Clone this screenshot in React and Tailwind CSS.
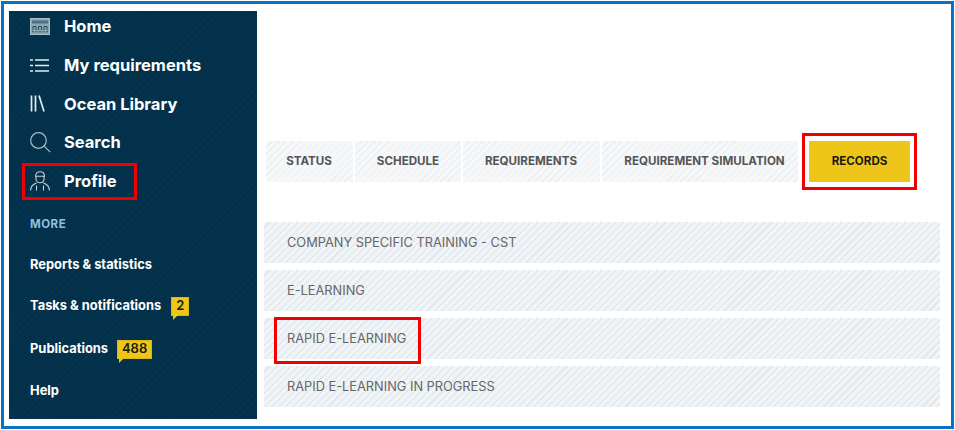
const tabStripes = 'bg-[repeating-linear-gradient(135deg,#f6f7f9_0,#f6f7f9_4px,#eceff2_4px,#eceff2_5px)]'
const rowStripes = 'bg-[repeating-linear-gradient(135deg,#f1f4f6_0,#f1f4f6_3.5px,#e3e8ed_3.5px,#e3e8ed_5px)]'

function HomeIcon() {
  return (
    <svg width="20" height="17" viewBox="0 0 20 17">
      <rect x="0.5" y="0.5" width="19" height="16" fill="#8ea5b2" stroke="#a9bcc7" />
      <rect x="2" y="2.5" width="16" height="3" fill="#4f7184" />
      <path d="M3 12V8.5h3V12M8.5 12V8.5h3V12M14 12V8.5h3V12" fill="none" stroke="#1d4a62" />
      <path d="M2 13.8h16" stroke="#1d4a62" strokeDasharray="2 1.5" />
    </svg>
  )
}

function ListIcon() {
  return (
    <svg width="19" height="15" viewBox="0 0 19 15" stroke="#e4ebef" strokeWidth="1.7">
      <path d="M0 2h3M5 2h14M0 7.5h3M5 7.5h14M0 13h3M5 13h14" />
    </svg>
  )
}

function LibraryIcon() {
  return (
    <svg width="15" height="17" viewBox="0 0 15 17" stroke="#e4ebef" strokeWidth="1.7" fill="none">
      <path d="M1.5 0.5v16M5.5 0.5v16M9 0.5l5 16" />
    </svg>
  )
}

function SearchIcon() {
  return (
    <svg width="21" height="21" viewBox="0 0 21 21" stroke="#a9bcc7" strokeWidth="1.2" fill="none">
      <circle cx="8.5" cy="8.5" r="7.8" />
      <path d="M14.2 14.2l6 6" />
    </svg>
  )
}

function ProfileIcon() {
  return (
    <svg width="20" height="20" viewBox="0 0 20 20" stroke="#c3d0d8" strokeWidth="1.1" fill="none">
      <path d="M5.5 5.2c0-6 9-6 9 0M5 5.2h10M6 5.5v2.5c0 5 8 5 8 0v-2.5" />
      <path d="M0.6 19.5c0-5 3-6.5 6-7.5M19.4 19.5c0-5-3-6.5-6-7.5M6.5 19.5v-5M13.5 19.5v-5" />
    </svg>
  )
}

function Badge({ children, className }) {
  return (
    <span className={`relative flex h-[19px] items-center justify-center border border-[#d8b61a] bg-[#eec61a] text-[13px] font-semibold text-[#1b1b10] ${className}`}>
      {children}
      <span className="absolute top-full left-[1px] size-0 border-t-[5px] border-r-[5px] border-t-[#eec61a] border-r-transparent" />
    </span>
  )
}

const mainNav = [
  { label: 'Home', icon: <HomeIcon /> },
  { label: 'My requirements', icon: <ListIcon /> },
  { label: 'Ocean Library', icon: <LibraryIcon /> },
  { label: 'Search', icon: <SearchIcon /> },
  { label: 'Profile', icon: <ProfileIcon /> },
]

const tabs = [
  { label: 'STATUS', w: 'w-[89px]' },
  { label: 'SCHEDULE', w: 'w-[108px] pl-px' },
  { label: 'REQUIREMENTS', w: 'w-[139px]' },
  { label: 'REQUIREMENT SIMULATION', w: 'w-[198px] pl-[10px]' },
]

const rows = ['COMPANY SPECIFIC TRAINING - CST', 'E-LEARNING', 'RAPID E-LEARNING', 'RAPID E-LEARNING IN PROGRESS']

export default function App() {
  return (
    <div className="h-[430px] w-[955px] overflow-hidden bg-white pt-[1px] pl-[1px] font-['Inter',sans-serif]">
      <div className="flex h-[428px] w-[953px] border-[3px] border-[#0a72c4] pt-[7px] pl-[5px]">
        {/* Sidebar */}
        <aside className="relative h-[408px] w-[248px] shrink-0 bg-[#03304a] bg-[repeating-linear-gradient(135deg,#03304a_0,#03304a_4px,#06354e_4px,#06354e_5px)] pl-[21px] text-white">
          <nav className="-mt-[4px] flex flex-col">
            {mainNav.map((item) => (
              <a key={item.label} className="flex h-[38.75px] items-center text-[16.5px] leading-none font-bold">
                <span className="flex w-[34px] justify-start">{item.icon}</span>
                {item.label}
              </a>
            ))}
          </nav>
          <div className="mt-[18px] text-[11.5px] leading-none font-bold tracking-[0.5px] text-[#8fc1dc]">MORE</div>
          <div className="mt-[29px] text-[12.9px] leading-none font-bold">Reports &amp; statistics</div>
          <div className="mt-[27px] flex h-[14px] items-center gap-[10px] text-[12.9px] font-bold">
            Tasks &amp; notifications
            <Badge className="w-[18px]">2</Badge>
          </div>
          <div className="mt-[29px] flex h-[14px] items-center gap-[9px] text-[12.9px] font-bold">
            Publications
            <Badge className="w-[35px]">488</Badge>
          </div>
          <div className="mt-[29px] text-[12.9px] leading-none font-bold">Help</div>
          <div className="absolute top-[152px] left-[13px] h-[37px] w-[115px] border-[3px] border-[#f00000]" />
        </aside>

        {/* Main */}
        <main className="relative flex-1 pl-[7px]">
          <div className="mt-[130px] flex items-stretch pl-[2px]">
            {tabs.map((t) => (
              <div key={t.label} className={`flex h-[41px] items-center justify-center border-r-2 border-white pr-px text-[11.6px] font-bold text-[#555] ${tabStripes} ${t.w}`}>
                {t.label}
              </div>
            ))}
            <div className="ml-[9px] flex h-[41px] w-[101px] items-center justify-center bg-[#eec61a] text-[11.6px] font-bold text-[#1b1b10]">
              RECORDS
            </div>
          </div>

          <div className="mt-[40px] flex w-[676px] flex-col gap-[7px]">
            {rows.map((r) => (
              <div key={r} className={`flex h-[41px] items-center pt-[1px] pl-[23px] text-[12.8px] text-[#666] ${rowStripes}`}>
                {r}
              </div>
            ))}
          </div>

          {/* red annotation boxes */}
          <div className="absolute top-[122px] left-[545px] h-[57px] w-[115px] border-[3px] border-[#f00000]" />
          <div className="absolute top-[306px] left-[17px] h-[47px] w-[147px] border-[3px] border-[#f00000]" />
        </main>
      </div>
    </div>
  )
}
